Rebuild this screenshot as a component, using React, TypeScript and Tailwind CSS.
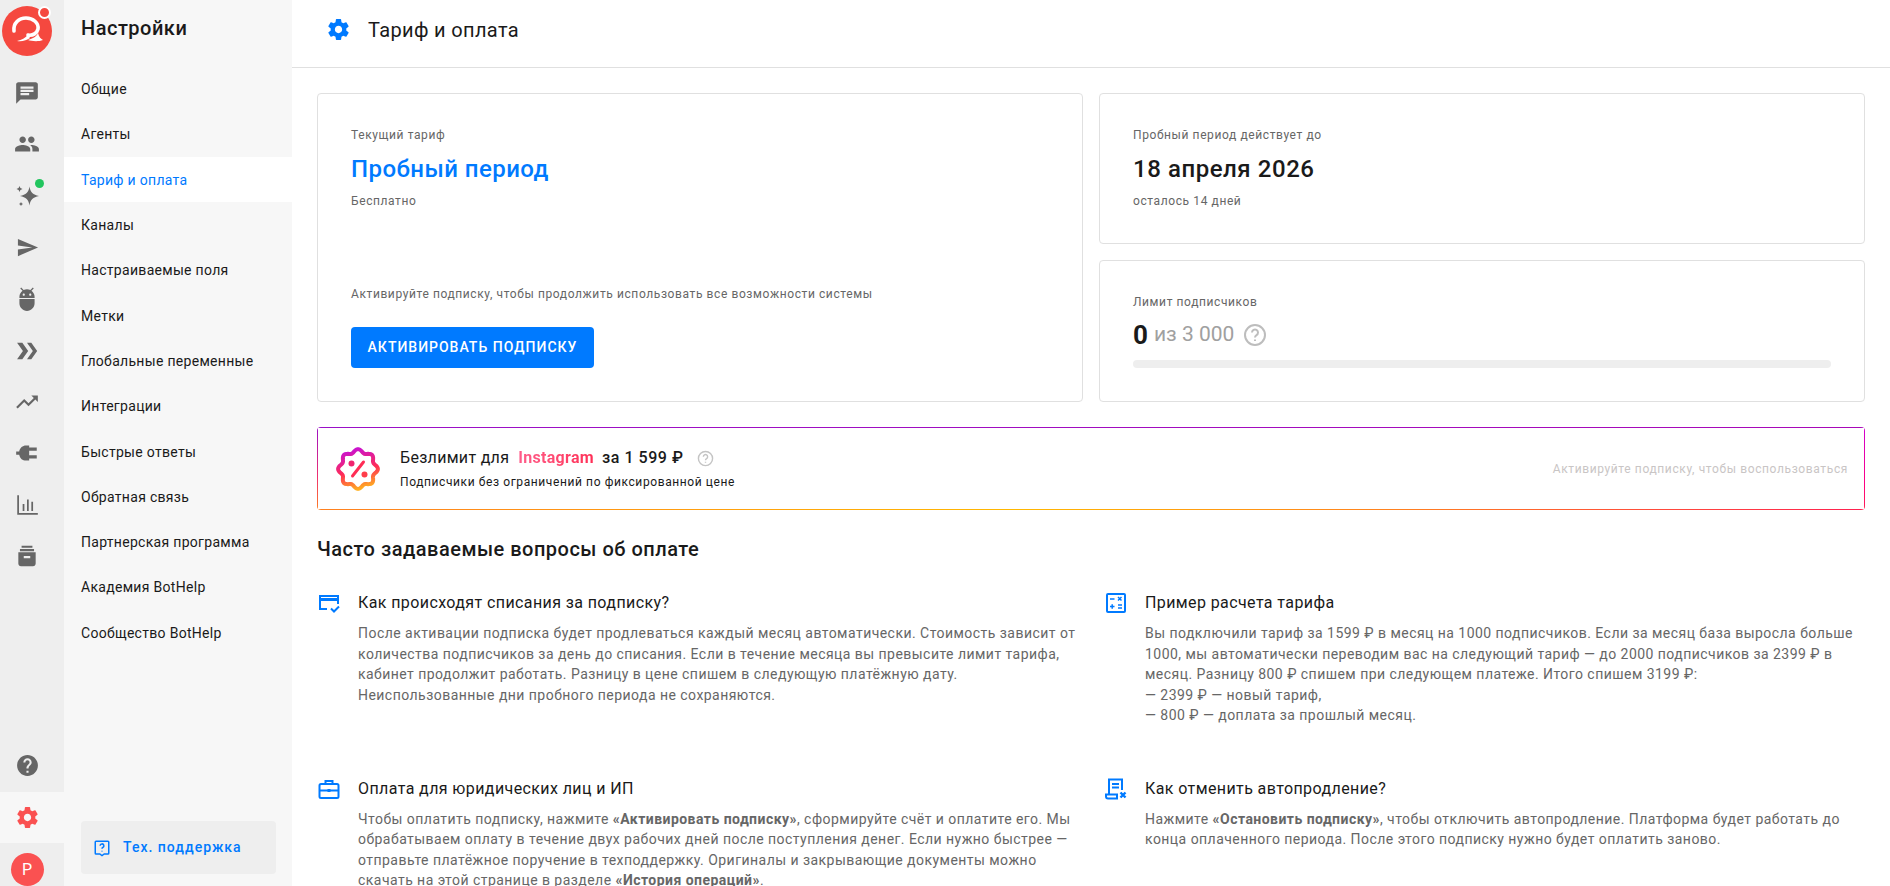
const menu = [
  "Общие",
  "Агенты",
  "Тариф и оплата",
  "Каналы",
  "Настраиваемые поля",
  "Метки",
  "Глобальные переменные",
  "Интеграции",
  "Быстрые ответы",
  "Обратная связь",
  "Партнерская программа",
  "Академия BotHelp",
  "Сообщество BotHelp",
];

// wavy outline of the discount badge
const badgePath = Array.from({ length: 97 }, (_, i) => {
  const a = (i / 96) * Math.PI * 2;
  const r = 18.2 + 1.7 * Math.cos(a * 8);
  return `${i === 0 ? "M" : "L"}${(22 + r * Math.sin(a)).toFixed(2)} ${(22 - r * Math.cos(a)).toFixed(2)}`;
}).join("") + "Z";

function Gear({ className }: { className: string }) {
  return (
    <svg viewBox="0 0 24 24" className={className} fill="currentColor">
      <path d="M19.43 12.98c.04-.32.07-.64.07-.98s-.03-.66-.07-.98l2.11-1.65c.19-.15.24-.42.12-.64l-2-3.46c-.12-.22-.39-.3-.61-.22l-2.49 1c-.52-.4-1.08-.73-1.69-.98l-.38-2.65C14.46 2.18 14.25 2 14 2h-4c-.25 0-.46.18-.49.42l-.38 2.65c-.61.25-1.17.59-1.69.98l-2.49-1c-.23-.09-.49 0-.61.22l-2 3.46c-.13.22-.07.49.12.64l2.11 1.65c-.04.32-.07.65-.07.98s.03.66.07.98l-2.11 1.65c-.19.15-.24.42-.12.64l2 3.46c.12.22.39.3.61.22l2.49-1c.52.4 1.08.73 1.69.98l.38 2.65c.03.24.24.42.49.42h4c.25 0 .46-.18.49-.42l.38-2.65c.61-.25 1.17-.59 1.69-.98l2.49 1c.23.09.49 0 .61-.22l2-3.46c.12-.22.07-.49-.12-.64l-2.11-1.65zM12 15.5c-1.93 0-3.5-1.57-3.5-3.5s1.57-3.5 3.5-3.5 3.5 1.57 3.5 3.5-1.57 3.5-3.5 3.5z" />
    </svg>
  );
}

function RailIcon({ children }: { children: React.ReactNode }) {
  return <div className="relative h-[51.5px] pr-[10px] flex items-center justify-center text-[#666]">{children}</div>;
}

function Rail() {
  return (
    <aside className="w-16 shrink-0 bg-[#eeeeee] flex flex-col h-full">
      <div className="relative h-[67px] pt-[6px] pr-[10px] flex items-start justify-center">
        <svg viewBox="0 0 50 50" className="w-[50px] h-[50px]">
          <circle cx="25" cy="25" r="25" fill="#f5483f" />
          <path d="M12 25c-1-8 5-13 12-13s13 5 12 11c-1 4-5 7-10 6" fill="none" stroke="#fff" strokeWidth="3.6" strokeLinecap="round" />
          <path d="M15 35c5-1 8-3 11-6l2 3c-3 2-8 4-13 3zM26 34c3 1 10 2 15 0-2-1-4-3-5-7-1 3-4 5-10 7z" fill="#fff" />
        </svg>
        <span className="absolute top-[6px] right-[13px] w-[13px] h-[13px] rounded-full bg-[#f5483f] border-2 border-white" />
      </div>
      <div className="flex flex-col">
        <RailIcon>
          <svg viewBox="0 0 24 24" className="w-[26px] h-[26px]" fill="currentColor">
            <path d="M20 2H4c-1.1 0-2 .9-2 2v18l4-4h14c1.100 0 2-.9 2-2V4c0-1.100-.9-2-2-2zM6 9h12v2H6V9zm8 5H6v-2h8v2zm4-6H6V6h12v2z" />
          </svg>
        </RailIcon>
        <RailIcon>
          <svg viewBox="0 0 24 24" className="w-[26px] h-[26px]" fill="currentColor">
            <path d="M16 11c1.660 0 2.990-1.340 2.990-3S17.660 5 16 5s-3 1.340-3 3 1.340 3 3 3zm-8 0c1.660 0 2.990-1.340 2.990-3S9.660 5 8 5 5 6.340 5 8s1.340 3 3 3zm0 2c-2.330 0-7 1.170-7 3.500V19h14v-2.500C15 14.170 10.330 13 8 13zm8 0c-.290 0-.620.020-.970.050 1.160.840 1.970 1.970 1.970 3.450V19h6v-2.500c0-2.330-4.670-3.500-7-3.500z" />
          </svg>
        </RailIcon>
        <RailIcon>
          <svg viewBox="0 0 24 24" className="w-[24px] h-[24px]" fill="currentColor">
            <path d="M14.500 2.500c.8 5.500 3.500 8.500 9.500 9.500-6 1-8.700 4-9.500 9.500-.8-5.500-3.500-8.500-9.500-9.500 6-1 8.700-4 9.500-9.500zM4.500 2l.9 2.100 2.100.9-2.100.9-.9 2.100-.9-2.100L1.500 5l2.100-.9zM6 18l.7 1.300 1.300.7-1.300.7L6 22l-.7-1.300L4 20l1.300-.7z" />
          </svg>
          <span className="absolute top-[9px] right-[20px] w-[9px] h-[9px] rounded-full bg-[#22c55e]" />
        </RailIcon>
        <RailIcon>
          <svg viewBox="0 0 24 24" className="w-[23px] h-[23px]" fill="currentColor">
            <path d="M2.010 21L23 12 2.010 3 2 10l15 2-15 2z" />
          </svg>
        </RailIcon>
        <RailIcon>
          <svg viewBox="0 0 24 24" className="w-[26px] h-[26px]" fill="currentColor">
            <path d="M5 16c0 3.870 3.130 7 7 7s7-3.130 7-7v-4H5v4zM16.120 4.370l2.100-2.100-.820-.830-2.300 2.310C14.160 3.280 13.120 3 12 3s-2.160.280-3.090.750L6.600 1.440l-.820.830 2.100 2.100C6.140 5.640 5 7.700 5 10v1h14v-1c0-2.300-1.140-4.360-2.880-5.630zM9 9c-.550 0-1-.450-1-1s.450-1 1-1 1 .450 1 1-.450 1-1 1zm6 0c-.550 0-1-.450-1-1s.450-1 1-1 1 .450 1 1-.450 1-1 1z" />
          </svg>
        </RailIcon>
        <RailIcon>
          <svg viewBox="0 0 24 24" className="w-[28px] h-[28px] mt-[2px]" fill="currentColor">
            <path d="M15.700 5H12l5 7-5 7h3.700l5-7z" />
            <path d="M8 5H3.500l5 7-5 7H8l5-7z" />
          </svg>
        </RailIcon>
        <RailIcon>
          <svg viewBox="0 0 24 24" className="w-[26px] h-[26px]" fill="currentColor">
            <path d="M16 6l2.290 2.290-4.880 4.880-4-4L2 16.590 3.410 18l6-6 4 4 6.300-6.290L22 12V6z" />
          </svg>
        </RailIcon>
        <RailIcon>
          <svg viewBox="0 0 24 24" className="w-[26px] h-[26px]" fill="currentColor">
            <path d="M14 5v14h-3c-3 0-5.500-2-6.200-5.500H2v-3h2.800C5.500 7 8 5 11 5zM14 7h7v3h-7zM14 14h7v3h-7z" />
          </svg>
        </RailIcon>
        <RailIcon>
          <svg viewBox="0 0 24 24" className="w-[26px] h-[26px]" fill="currentColor">
            <path d="M3 3h1.600v16.400H22V21H3zM8 11h1.600v6.500H8zM12 7h1.600v10.500H12zM16 9h1.600v8.500H16z" />
          </svg>
        </RailIcon>
        <RailIcon>
          <svg viewBox="0 0 24 24" className="w-[26px] h-[26px]" fill="currentColor">
            <path d="M7 2.500h10v1.800H7zM5.500 5.500h13v2h-13zM4 8.500h16V19c0 1.500-1 2.500-2.500 2.500h-11C5 21.500 4 20.500 4 19zM9 12v2h6v-2z" fillRule="evenodd" />
          </svg>
        </RailIcon>
      </div>
      <div className="mt-auto flex flex-col">
        <div className="h-[46px] pb-[8px] pr-[10px] flex items-center justify-center text-[#666]">
          <svg viewBox="0 0 24 24" className="w-[25px] h-[25px]" fill="currentColor">
            <path d="M12 2C6.480 2 2 6.480 2 12s4.480 10 10 10 10-4.480 10-10S17.520 2 12 2zm1 17h-2v-2h2v2zm2.070-7.750l-.9.920C13.450 12.900 13 13.500 13 15h-2v-.5c0-1.100.45-2.100 1.170-2.830l1.240-1.260c.37-.36.590-.86.590-1.410 0-1.100-.9-2-2-2s-2 .9-2 2H8c0-2.210 1.790-4 4-4s4 1.790 4 4c0 .88-.36 1.680-.93 2.250z" />
          </svg>
        </div>
        <div className="h-[51px] bg-[#f7f7f7] pr-[10px] flex items-center justify-center text-[#fa5151]">
          <Gear className="w-[25px] h-[25px]" />
        </div>
        <div className="h-[43px] pr-[10px] flex items-start justify-center pt-[10px]">
          <span className="w-[33px] h-[33px] rounded-full bg-[#fa5151] text-white text-[16px] flex items-center justify-center">Р</span>
        </div>
      </div>
    </aside>
  );
}

function Menu() {
  return (
    <nav className="w-[228px] shrink-0 bg-[#f7f7f7] flex flex-col h-full">
      <h2 className="pl-[17px] pt-[16px] h-[66px] text-[20px] leading-[24px] tracking-[0.5px] font-medium text-[#1a1a1a]">Настройки</h2>
      <ul className="flex flex-col">
        {menu.map((m) => (
          <li
            key={m}
            className={`h-[45.3px] pl-[17px] pt-[2px] flex items-center text-[14px] tracking-[0.3px] ${
              m === "Тариф и оплата" ? "bg-white text-[#007aff]" : "text-[#1a1a1a]"
            }`}
          >
            {m}
          </li>
        ))}
      </ul>
      <div className="mt-auto ml-[17px] mr-4 mb-3 h-[53px] bg-[#eeeeee] rounded-[4px] flex items-center pl-3 gap-3 text-[#007aff]">
        <svg viewBox="0 0 24 24" className="w-[18px] h-[18px]" fill="none" stroke="currentColor" strokeWidth="2">
          <path d="M4 3h16a1 1 0 0 1 1 1v15a1 1 0 0 1-1 1h-5l-3 2-3-2H4a1 1 0 0 1-1-1V4a1 1 0 0 1 1-1z" />
          <path d="M9.500 9a2.500 2.500 0 1 1 3.500 2.300c-.7.400-1 .9-1 1.700M12 15.500v1" />
        </svg>
        <span className="text-[14px] font-medium tracking-[1px]">Тех. поддержка</span>
      </div>
    </nav>
  );
}

function Faq({ icon, title, children }: { icon: React.ReactNode; title: string; children: React.ReactNode }) {
  return (
    <div className="flex gap-[17px] h-[185.6px]">
      <div className="w-[24px] shrink-0 text-[#007aff]">{icon}</div>
      <div className="flex-1 min-w-0">
        <h4 className="text-[16px] leading-[24px] tracking-[0.4px] text-[#1a1a1a]">{title}</h4>
        <p className="mt-[8px] text-[14px] leading-[20.5px] tracking-[0.46px] text-[#666]">{children}</p>
      </div>
    </div>
  );
}

export default function App() {
  return (
    <div className="flex h-[886px] overflow-hidden bg-white font-['Roboto',sans-serif]">
      <Rail />
      <Menu />
      <main className="flex-1 min-w-0 flex flex-col">
        <header className="h-[68px] shrink-0 border-b border-[#e0e0e0] flex items-center pl-[34px] pb-[8px] gap-[17px]">
          <Gear className="w-[25px] h-[25px] text-[#007aff]" />
          <h1 className="text-[20px] tracking-[0.35px] text-[#1a1a1a]">Тариф и оплата</h1>
        </header>
        <div className="px-[25px] pt-[25px] overflow-hidden">
          <div className="grid grid-cols-2 gap-4">
            <section className="border border-[#e0e0e0] rounded-[4px] h-[309px] px-[33px] pt-[32px] flex flex-col">
              <span className="text-[12px] leading-[18px] tracking-[0.6px] text-[#666]">Текущий тариф</span>
              <span className="mt-[9px] text-[24px] leading-[32px] tracking-[0.45px] font-medium text-[#007aff]">Пробный период</span>
              <span className="mt-[7px] text-[12px] leading-[18px] tracking-[0.6px] text-[#666]">Бесплатно</span>
              <span className="mt-auto text-[12px] leading-[18px] tracking-[0.6px] text-[#666]">Активируйте подписку, чтобы продолжить использовать все возможности системы</span>
              <button className="mt-[24px] mb-[33px] w-[243px] h-[41px] shrink-0 rounded-[4px] bg-[#007aff] text-white text-[14px] font-medium tracking-[1px]">АКТИВИРОВАТЬ ПОДПИСКУ</button>
            </section>
            <div className="flex flex-col gap-4">
              <section className="border border-[#e0e0e0] rounded-[4px] h-[151px] px-[33px] pt-[32px] flex flex-col">
                <span className="text-[12px] leading-[18px] tracking-[0.6px] text-[#666]">Пробный период действует до</span>
                <span className="mt-[9px] text-[24px] leading-[32px] tracking-[0.55px] font-medium text-[#1a1a1a]">18 апреля 2026</span>
                <span className="mt-[7px] text-[12px] leading-[18px] tracking-[0.6px] text-[#666]">осталось 14 дней</span>
              </section>
              <section className="border border-[#e0e0e0] rounded-[4px] h-[142px] px-[33px] pt-[32px] flex flex-col">
                <span className="text-[12px] leading-[18px] tracking-[0.6px] text-[#666]">Лимит подписчиков</span>
                <div className="mt-[10px] flex items-center h-[28px]">
                  <span className="text-[26px] font-bold text-[#1a1a1a]">0</span>
                  <span className="ml-[6px] text-[21px] text-[#a0a0a0]">из 3 000</span>
                  <svg viewBox="0 0 24 24" className="ml-[9px] w-[24px] h-[24px] text-[#bdbdbd]" fill="none" stroke="currentColor" strokeWidth="2">
                    <circle cx="12" cy="12" r="10" />
                    <path d="M9 9.500a3 3 0 1 1 4.500 2.600c-1 .6-1.500 1.100-1.500 2.400M12 16.500v1.500" />
                  </svg>
                </div>
                <div className="mt-[11px] h-2 rounded-full bg-[#eeeeee]" />
              </section>
            </div>
          </div>
          <div className="mt-[25px] h-[83px] rounded-[4px] p-px [background:linear-gradient(90deg,#9a10c8,#a808b8)_top/100%_1px_no-repeat,linear-gradient(90deg,#ff8020,#ffb800_45%,#ff8020_70%,#ff2050)_bottom/100%_1px_no-repeat,linear-gradient(180deg,#9a10c8,#f03070_60%,#ff8020)_left/1px_100%_no-repeat,linear-gradient(180deg,#d000d0,#ff0080_70%,#ff2050)_right/1px_100%_no-repeat]">
            <div className="h-full bg-white rounded-[3px] flex items-center pl-[18px] pr-[16px]">
              <svg viewBox="0 0 44 44" className="w-[44px] h-[44px]" fill="none">
                <defs>
                  <linearGradient id="badge" x1="0.35" y1="0" x2="0.6" y2="1">
                    <stop offset="0" stopColor="#c913d0" />
                    <stop offset="0.55" stopColor="#ff2d55" />
                    <stop offset="1" stopColor="#ffb020" />
                  </linearGradient>
                </defs>
                <path d={badgePath} stroke="url(#badge)" strokeWidth="4" strokeLinejoin="round" />
                <path d="M16.500 29l11-14" stroke="#ff2d55" strokeWidth="3" strokeLinecap="round" />
                <circle cx="15.500" cy="16.500" r="3" fill="#f0246e" />
                <circle cx="28.500" cy="27.500" r="3" fill="#ff3d4a" />
              </svg>
              <div className="ml-[20px]">
                <div className="flex items-center text-[16px] leading-[24px] tracking-[0.3px] text-[#1a1a1a]">
                  <span>Безлимит для</span>
                  <span className="ml-[9px] font-bold bg-gradient-to-r from-[#ff5c8a] to-[#ff2d55] bg-clip-text text-transparent">Instagram</span>
                  <span className="ml-[8px] font-medium tracking-[0.55px]">за 1 599 ₽</span>
                  <svg viewBox="0 0 24 24" className="ml-[13px] w-[17px] h-[17px] text-[#c4c4c4]" fill="none" stroke="currentColor" strokeWidth="2">
                    <circle cx="12" cy="12" r="10" />
                    <path d="M9 9.500a3 3 0 1 1 4.500 2.600c-1 .6-1.500 1.100-1.500 2.400M12 16.500v1.500" />
                  </svg>
                </div>
                <div className="mt-[3px] text-[12px] leading-[18px] tracking-[0.6px] text-[#1a1a1a]">Подписчики без ограничений по фиксированной цене</div>
              </div>
              <span className="ml-auto text-[12px] tracking-[0.62px] text-[#c9c5c5]">Активируйте подписку, чтобы воспользоваться</span>
            </div>
          </div>
          <h3 className="mt-[25px] text-[20px] leading-[28px] tracking-[0.5px] font-medium text-[#1a1a1a]">Часто задаваемые вопросы об оплате</h3>
          <div className="mt-[28px] grid grid-cols-2 gap-x-[26px]">
            <Faq
              title="Как происходят списания за подписку?"
              icon={
                <svg viewBox="0 0 24 24" className="w-[24px] h-[24px]" fill="none" stroke="currentColor" strokeWidth="2">
                  <path d="M10 18H3V5h18v8" />
                  <path d="M3 8.500h18" strokeWidth="3" />
                  <path d="M14 17.500l3 3 5-5" />
                </svg>
              }
            >
              После активации подписка будет продлеваться каждый месяц автоматически. Стоимость зависит от количества подписчиков за день до списания. Если в течение месяца вы превысите лимит тарифа, кабинет продолжит работать. Разницу в цене спишем в следующую платёжную дату. Неиспользованные дни пробного периода не сохраняются.
            </Faq>
            <Faq
              title="Пример расчета тарифа"
              icon={
                <svg viewBox="0 0 24 24" className="w-[24px] h-[24px]" fill="none" stroke="currentColor" strokeWidth="2">
                  <rect x="3" y="3" width="18" height="18" rx="1" />
                  <path d="M6 8h4.500M14 6l3.500 3.500M17.500 6L14 9.500M6 15.500h4.500M8.200 13.200v4.600M14 14h4M14 17h4" strokeWidth="1.500" />
                </svg>
              }
            >
              Вы подключили тариф за 1599 ₽ в месяц на 1000 подписчиков. Если за месяц база выросла больше 1000, мы автоматически переводим вас на следующий тариф — до 2000 подписчиков за 2399 ₽ в месяц. Разницу 800 ₽ спишем при следующем платеже. Итого спишем 3199 ₽:
              <br />— 2399 ₽ — новый тариф,
              <br />— 800 ₽ — доплата за прошлый месяц.
            </Faq>
            <Faq
              title="Оплата для юридических лиц и ИП"
              icon={
                <svg viewBox="0 0 24 24" className="w-[24px] h-[24px]" fill="none" stroke="currentColor" strokeWidth="2">
                  <rect x="2.500" y="7" width="19" height="14" rx="1.500" />
                  <path d="M8.500 7V4h7v3M2.500 13.500h19" />
                  <rect x="10.500" y="12" width="3" height="3" fill="currentColor" stroke="none" />
                </svg>
              }
            >
              Чтобы оплатить подписку, нажмите <b className="font-bold">«Активировать подписку»</b>, сформируйте счёт и оплатите его. Мы обрабатываем оплату в течение двух рабочих дней после поступления денег. Если нужно быстрее — отправьте платёжное поручение в техподдержку. Оригиналы и закрывающие документы можно скачать на этой странице в разделе <b className="font-bold">«История операций»</b>.
            </Faq>
            <Faq
              title="Как отменить автопродление?"
              icon={
                <svg viewBox="0 0 24 24" className="w-[24px] h-[24px]" fill="none" stroke="currentColor" strokeWidth="2">
                  <path d="M5 17V2.500h13V13" />
                  <path d="M8 7h7M8 10.500h7" />
                  <path d="M2 17.500v2a2 2 0 0 0 2 2h9v-4z" />
                  <path d="M16.500 15.500l5 5M21.500 15.500l-5 5" strokeWidth="2.400" />
                </svg>
              }
            >
              Нажмите <b className="font-bold">«Остановить подписку»</b>, чтобы отключить автопродление. Платформа будет работать до конца оплаченного периода. После этого подписку нужно будет оплатить заново.
            </Faq>
          </div>
        </div>
      </main>
    </div>
  );
}
